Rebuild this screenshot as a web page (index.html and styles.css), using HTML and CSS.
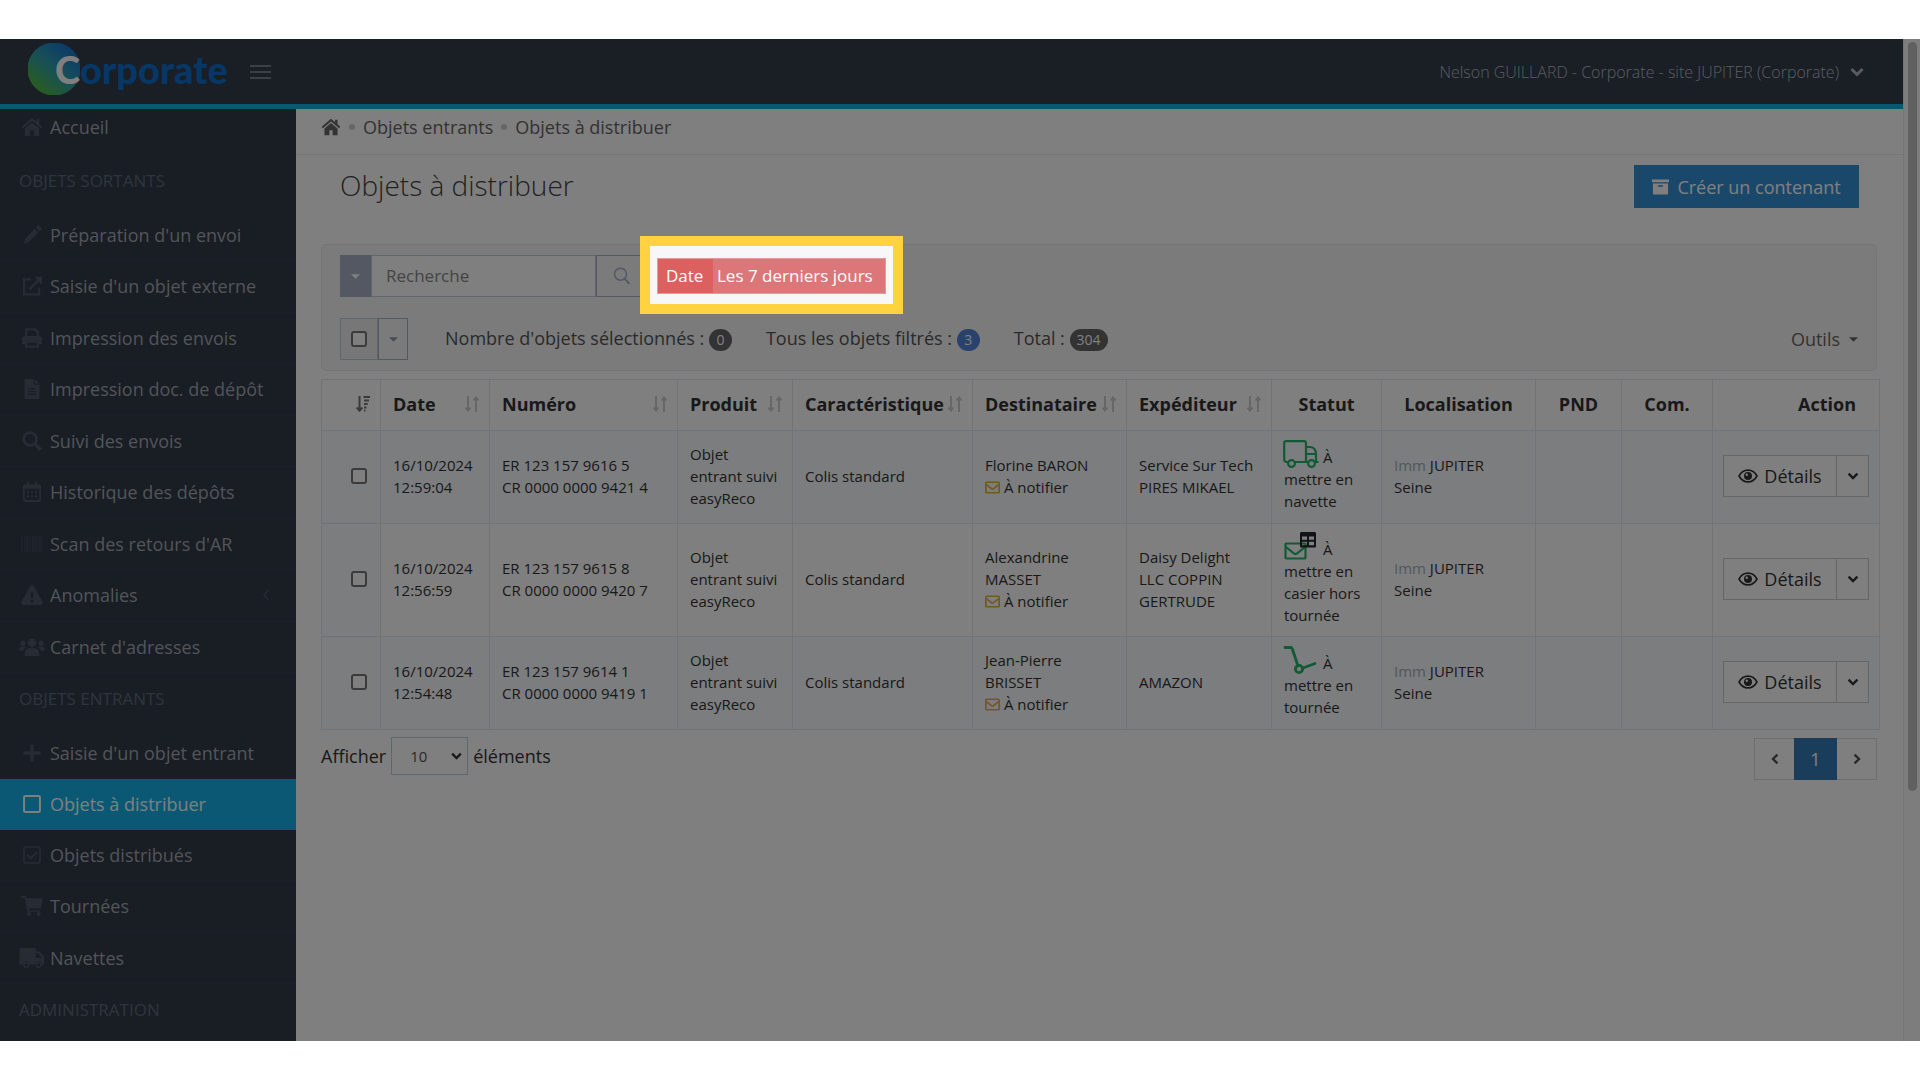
FILE: index.html
```html
<!DOCTYPE html>
<html lang="fr">
<head>
<meta charset="utf-8">
<title>Objets à distribuer</title>
<link rel="stylesheet" href="styles.css">
</head>
<body>
<svg class="sprite" aria-hidden="true">
  <symbol id="home" viewBox="0 0 24 22"><path d="M12 1 0.6 10.6l1.5 1.8L12 4.2l9.900 8.200 1.500-1.800-3.400-2.900V2h-3v3.200z"/><path d="M12 6 4 12.700V21h6v-6h4v6h6v-8.300z"/></symbol>
  <symbol id="pencil" viewBox="0 0 24 24"><path d="M15 4.500 19.500 9 7.500 21 2 22.500 3.500 17zM16.500 3l2-1.800c.7-.7 1.800-.7 2.500 0l2 2c.7.700.7 1.800 0 2.500L21 7.500zM4.500 18.500 3.800 20.800 6 20z" fill-rule="evenodd"/></symbol>
  <symbol id="external" viewBox="0 0 24 24"><path d="M11 4H2.500v18h18v-8" fill="none" stroke="currentColor" stroke-width="2.600"/><path d="M9 16 20 5" stroke="currentColor" stroke-width="3.200"/><path d="M14.500 1H24v9.500z"/></symbol>
  <symbol id="print" viewBox="0 0 24 24"><path d="M5 11V1.500h11L19 4.500V11M5 16h14v6.500H5z" fill="none" stroke="currentColor" stroke-width="2.600"/><path d="M3.500 9.500h17C22.500 9.500 24 11 24 13v6.500h-4v-5H4v5H0V13c0-2 1.500-3.500 3.500-3.500z"/></symbol>
  <symbol id="file" viewBox="0 0 18 24"><path d="M1 0h10v7h7v16c0 .6-.4 1-1 1H1c-.6 0-1-.4-1-1V1c0-.6.4-1 1-1zm3.500 11v1.500h9V11zm0 3.300v1.500h9v-1.500zm0 3.300v1.500h9v-1.500zM12.500 0 18 5.500h-5.500z" fill-rule="evenodd"/></symbol>
  <symbol id="search" viewBox="0 0 24 24"><circle cx="9.700" cy="9.700" r="7.700" fill="none" stroke="currentColor" stroke-width="3.400"/><path d="m15 15 7.500 7.500" stroke="currentColor" stroke-width="4"/></symbol>
  <symbol id="search-thin" viewBox="0 0 24 24"><circle cx="10" cy="9.500" r="8" fill="none" stroke="currentColor" stroke-width="2"/><path d="m15.500 15.500 6.500 7" stroke="currentColor" stroke-width="2.600"/></symbol>
  <symbol id="calendar" viewBox="0 0 22 24"><rect x="1.200" y="4.200" width="19.600" height="18.600" rx="2" fill="none" stroke="currentColor" stroke-width="2.200"/><path d="M1 4h20v4H1zM5 0h2.600v5H5zM14.400 0H17v5h-2.600zM5 11h2.500v2.500H5zm4.800 0h2.500v2.500H9.800zm4.700 0H17v2.500h-2.500zM5 16h2.500v2.500H5zm4.800 0h2.500v2.500H9.800zm4.700 0H17v2.500h-2.500z"/></symbol>
  <symbol id="barcode" viewBox="0 0 24 18"><path d="M0 0h1.500v18H0zM3 0h1v18H3zM5 0h2v18H5zM8 0h1v18H8zM10 0h.8v18H10zM12 0h2v18h-2zM15 0h2v18h-2zM18 0h1v18h-1zM20 0h2v18h-2zM23 0h1v18h-1z"/></symbol>
  <symbol id="warning" viewBox="0 0 26 24"><path d="M13 0c.8 0 1.400.400 1.800 1l10.900 19.500c.9 1.500-.1 3.500-1.800 3.500H2.100C.4 24-.6 22 .3 20.500L11.200 1c.4-.6 1-1 1.800-1zm-1.700 8 .4 7.500h2.600l.4-7.500zM13 17a2 2 0 1 0 0 4 2 2 0 0 0 0-4z" fill-rule="evenodd"/></symbol>
  <symbol id="users" viewBox="0 0 30 21"><circle cx="15" cy="5.500" r="5"/><circle cx="4.500" cy="6" r="3"/><circle cx="25.500" cy="6" r="3"/><path d="M6.500 21v-3c0-3.500 2.500-6 6-6h5c3.500 0 6 2.500 6 6v3zM0 14.500v-1.500c0-1.700 1.300-3 3-3h3c.8 0 1.500.300 2 .8-1.600 1-2.600 2.300-2.900 3.700zM30 14.500v-1.500c0-1.700-1.300-3-3-3h-3c-.8 0-1.500.300-2 .8 1.600 1 2.600 2.300 2.900 3.700z"/></symbol>
  <symbol id="plus" viewBox="0 0 22 22"><path d="M9 0.500h4V9h8.500v4H13v8.500H9V13H.5V9H9z"/></symbol>
  <symbol id="square" viewBox="0 0 22 22"><rect x="1.300" y="1.300" width="19.400" height="19.400" rx="1.500" fill="none" stroke="currentColor" stroke-width="2.400"/></symbol>
  <symbol id="check-square" viewBox="0 0 22 22"><rect x="1.200" y="1.200" width="19.600" height="19.600" rx="1.500" fill="none" stroke="currentColor" stroke-width="2"/><path d="m5.500 11 4 4 7.500-7.500" fill="none" stroke="currentColor" stroke-width="2.400"/></symbol>
  <symbol id="cart" viewBox="0 0 26 24"><path d="M0 0h5.500l.5 2.800h20L23.500 15H9l.4 2.300h13.800L22.700 19H7.500L4 2.300H0z"/><circle cx="9.500" cy="21.500" r="2.400"/><circle cx="21" cy="21.500" r="2.400"/></symbol>
  <symbol id="truck" viewBox="0 0 30 24"><path d="M1.500 0H18c.8 0 1.500.700 1.500 1.500V4h3.200c.6 0 1.200.200 1.600.700l4.500 4.500c.4.400.7 1 .7 1.600V18H30v1.800h-3a4 4 0 0 0-8 0h-7a4 4 0 0 0-8 0H1.500C.7 19.800 0 19.200 0 18.300V1.500C0 .700.7 0 1.500 0zm18 6.300V12h7.700l-4.700-5.700z" fill-rule="evenodd"/><circle cx="8" cy="20.300" r="2.900" fill="none" stroke="currentColor" stroke-width="1.800"/><circle cx="23" cy="20.300" r="2.900" fill="none" stroke="currentColor" stroke-width="1.800"/></symbol>
  <symbol id="angle-left" viewBox="0 0 8 14"><path d="M7 1 1.500 7 7 13" fill="none" stroke="currentColor" stroke-width="1.600"/></symbol>
  <symbol id="chevron-down" viewBox="0 0 14 10"><path d="m1.500 2 5.500 5.500L12.500 2" fill="none" stroke="currentColor" stroke-width="3"/></symbol>
  <symbol id="chevron-left" viewBox="0 0 10 14"><path d="M8 1.500 2.500 7 8 12.500" fill="none" stroke="currentColor" stroke-width="3"/></symbol>
  <symbol id="chevron-right" viewBox="0 0 10 14"><path d="M2 1.500 7.500 7 2 12.500" fill="none" stroke="currentColor" stroke-width="3"/></symbol>
  <symbol id="caret" viewBox="0 0 10 5"><path d="M0 0h10L5 5z"/></symbol>
  <symbol id="archive" viewBox="0 0 18 16"><path d="M0 0h18v3H0zM1 4.200h16V15c0 .6-.4 1-1 1H2c-.6 0-1-.4-1-1zm5.500 2v1.500h5V6.200z" fill-rule="evenodd"/></symbol>
  <symbol id="sort" viewBox="0 0 14 16"><path d="M3 0v14M0.500 11.500 3 14.500l2.500-3M11 16V2M8.500 4.500 11 1.500l2.500 3" fill="none" stroke="currentColor" stroke-width="1.900"/></symbol>
  <symbol id="sort-desc" viewBox="0 0 14 16"><path d="M3.500 0v14M.7 11.500l2.800 3.300 2.800-3.300" fill="none" stroke="currentColor" stroke-width="2"/><path d="M7.500 1H14M8 4.500h5M8 8h3.700M8 11.500h2.500M8 14.500h1.500" stroke="currentColor" stroke-width="2" fill="none"/></symbol>
  <symbol id="mail" viewBox="0 0 16 13"><rect x=".9" y=".9" width="14.200" height="11.200" rx=".8" fill="none" stroke="currentColor" stroke-width="1.800"/><path d="m1.500 3.500 5.300 4.300c.7.600 1.700.6 2.400 0l5.300-4.300" fill="none" stroke="currentColor" stroke-width="1.800"/></symbol>
  <symbol id="eye" viewBox="0 0 20 14"><path d="M1 7c2-3.700 5.200-5.900 9-5.900S17 3.300 19 7c-2 3.700-5.200 5.900-9 5.900S3 10.700 1 7z" fill="none" stroke="currentColor" stroke-width="1.600"/><circle cx="10" cy="7" r="4"/><circle cx="8.800" cy="5.800" r="1.200" fill="#fff"/></symbol>
  <symbol id="truck-line" viewBox="0 0 36 28"><g fill="none" stroke="currentColor" stroke-width="2.200"><path d="M5 22H3.500C2 22 1.200 21 1.200 19.500V3c0-1.300.9-1.800 2-1.800h17.800c1.200 0 2 .8 2 1.800v19H12"/><path d="M23 7h4.500c3.500 0 5.500 3.500 5.500 7v8h2.500M23 22h3M23 14h10"/><circle cx="8.500" cy="23.500" r="3.400"/><circle cx="28.500" cy="23.500" r="3.400"/></g></symbol>
  <symbol id="mail-grid" viewBox="0 0 36 28"><g fill="none" stroke="currentColor" stroke-width="2.200"><rect x="2.500" y="11.500" width="20" height="15" rx=".6"/><path d="m3 15 7.500 6.200c1.200 1 2.800 1 4 0L22 15"/></g><path d="M18.500 0h13c1 0 1.500.600 1.500 1.500v12.500c0 1-.6 1.500-1.500 1.500h-13c-1 0-1.500-.5-1.500-1.500V1.500c0-.9.500-1.500 1.500-1.500zM19 4.500v3.300h5V4.500zm7 0v3.300h5V4.500zm-7 5.300v3.500h5V9.800zm7 0v3.500h5V9.800z" fill="#22262e" fill-rule="evenodd"/></symbol>
  <symbol id="dolly" viewBox="0 0 36 28"><g fill="none" stroke="currentColor" stroke-width="2.800"><path d="M2 1.500h5.500c1 0 1.500.500 1.800 1.300L15 20M20 22l12-4.500" stroke-linecap="round"/><circle cx="16" cy="23" r="3.600"/></g></symbol>
</svg>

<div class="frame">
  <div class="app">
    <header class="topbar">
      <a class="logo" href="#"><span class="logo-initial">C</span>orporate</a>
      <button class="menu-toggle" type="button" aria-label="Menu"><span></span><span></span><span></span></button>
      <button class="user" type="button">Nelson GUILLARD - Corporate - site JUPITER (Corporate)<svg class="i-chevron"><use href="#chevron-down"/></svg></button>
    </header>
    <div class="body">
      <nav class="sidebar">
        <a class="item first" href="#"><svg><use href="#home"/></svg>Accueil</a>
        <h2>OBJETS SORTANTS</h2>
        <ul>
          <li><a class="item" href="#"><svg><use href="#pencil"/></svg>Préparation d'un envoi</a></li>
          <li><a class="item" href="#"><svg><use href="#external"/></svg>Saisie d'un objet externe</a></li>
          <li><a class="item" href="#"><svg><use href="#print"/></svg>Impression des envois</a></li>
          <li><a class="item" href="#"><svg><use href="#file"/></svg>Impression doc. de dépôt</a></li>
          <li><a class="item" href="#"><svg><use href="#search"/></svg>Suivi des envois</a></li>
          <li><a class="item" href="#"><svg><use href="#calendar"/></svg>Historique des dépôts</a></li>
          <li><a class="item" href="#"><svg class="barcode"><use href="#barcode"/></svg>Scan des retours d'AR</a></li>
          <li><a class="item" href="#"><svg><use href="#warning"/></svg>Anomalies<svg class="more"><use href="#angle-left"/></svg></a></li>
          <li><a class="item" href="#"><svg class="low"><use href="#users"/></svg>Carnet d'adresses</a></li>
        </ul>
        <h2>OBJETS ENTRANTS</h2>
        <ul>
          <li><a class="item" href="#"><svg class="low"><use href="#plus"/></svg>Saisie d'un objet entrant</a></li>
          <li><a class="item active" href="#" aria-current="page"><svg class="low"><use href="#square"/></svg>Objets à distribuer</a></li>
          <li><a class="item" href="#"><svg class="low"><use href="#check-square"/></svg>Objets distribués</a></li>
          <li><a class="item" href="#"><svg><use href="#cart"/></svg>Tournées</a></li>
          <li><a class="item" href="#"><svg><use href="#truck"/></svg>Navettes</a></li>
        </ul>
        <h2>ADMINISTRATION</h2>
      </nav>
      <main class="content">
        <nav class="crumbs">
          <a href="#" aria-label="Accueil"><svg><use href="#home"/></svg></a>
          <i></i><a href="#">Objets entrants</a><i></i><a href="#">Objets à distribuer</a>
        </nav>
        <div class="page">
          <div class="heading">
            <h1>Objets à distribuer</h1>
            <button class="create" type="button"><svg><use href="#archive"/></svg>Créer un contenant</button>
          </div>
          <section class="filters">
            <div class="search-row">
              <button class="search-menu" type="button" aria-label="Options de recherche"><svg class="i-caret"><use href="#caret"/></svg></button>
              <input class="search-input" type="text" placeholder="Recherche" aria-label="Recherche">
              <button class="search-go" type="button" aria-label="Rechercher"><svg><use href="#search-thin"/></svg></button>
              <div class="spot"><button class="tag" type="button"><span class="tag-key">Date</span><span class="tag-value">Les 7 derniers jours</span></button></div>
            </div>
            <div class="count-row">
              <label class="check-all"><input type="checkbox" aria-label="Tout sélectionner"></label>
              <button class="check-menu" type="button" aria-label="Options de sélection"><svg class="i-caret"><use href="#caret"/></svg></button>
              <p class="counts">
                <span>Nombre d'objets sélectionnés : <b>0</b></span>
                <span>Tous les objets filtrés : <b class="blue">3</b></span>
                <span>Total : <b>304</b></span>
              </p>
              <button class="tools" type="button">Outils<svg class="i-caret"><use href="#caret"/></svg></button>
            </div>
          </section>
          <table>
            <colgroup><col class="w-check"><col class="w-date"><col class="w-num"><col class="w-prod"><col class="w-car"><col class="w-dest"><col class="w-exp"><col class="w-stat"><col class="w-loc"><col class="w-pnd"><col class="w-com"><col class="w-act"></colgroup>
            <thead>
              <tr>
                <th class="end" aria-label="Ordre"><svg class="i-sort on"><use href="#sort-desc"/></svg></th>
                <th><span class="th">Date<svg class="i-sort"><use href="#sort"/></svg></span></th>
                <th><span class="th">Numéro<svg class="i-sort"><use href="#sort"/></svg></span></th>
                <th><span class="th">Produit<svg class="i-sort"><use href="#sort"/></svg></span></th>
                <th><span class="th">Caractéristique<svg class="i-sort"><use href="#sort"/></svg></span></th>
                <th><span class="th">Destinataire<svg class="i-sort"><use href="#sort"/></svg></span></th>
                <th><span class="th">Expéditeur<svg class="i-sort"><use href="#sort"/></svg></span></th>
                <th class="mid">Statut</th><th class="mid">Localisation</th><th class="mid">PND</th><th class="mid">Com.</th><th class="last">Action</th>
              </tr>
            </thead>
            <tbody>
              <tr>
                <td class="end"><input type="checkbox" aria-label="Sélectionner ER 123 157 9616 5"></td>
                <td>16/10/2024 12:59:04</td>
                <td>ER 123 157 9616 5<br>CR 0000 0000 9421 4</td>
                <td>Objet entrant suivi easyReco</td>
                <td>Colis standard</td>
                <td>Florine BARON<br><svg class="i-mail"><use href="#mail"/></svg> À notifier</td>
                <td>Service Sur Tech<br>PIRES MIKAEL</td>
                <td class="status"><svg><use href="#truck-line"/></svg> À mettre en navette</td>
                <td><span class="muted">Imm</span> JUPITER<br>Seine</td>
                <td></td><td></td>
                <td class="actions"><div class="split"><button type="button"><svg><use href="#eye"/></svg>Détails</button><button type="button" class="more-btn" aria-label="Autres actions"><svg><use href="#chevron-down"/></svg></button></div></td>
              </tr>
              <tr>
                <td class="end"><input type="checkbox" aria-label="Sélectionner ER 123 157 9615 8"></td>
                <td>16/10/2024 12:56:59</td>
                <td>ER 123 157 9615 8<br>CR 0000 0000 9420 7</td>
                <td>Objet entrant suivi easyReco</td>
                <td>Colis standard</td>
                <td>Alexandrine MASSET<br><svg class="i-mail"><use href="#mail"/></svg> À notifier</td>
                <td>Daisy Delight LLC COPPIN GERTRUDE</td>
                <td class="status"><svg><use href="#mail-grid"/></svg> À mettre en casier hors tournée</td>
                <td><span class="muted">Imm</span> JUPITER<br>Seine</td>
                <td></td><td></td>
                <td class="actions"><div class="split"><button type="button"><svg><use href="#eye"/></svg>Détails</button><button type="button" class="more-btn" aria-label="Autres actions"><svg><use href="#chevron-down"/></svg></button></div></td>
              </tr>
              <tr>
                <td class="end"><input type="checkbox" aria-label="Sélectionner ER 123 157 9614 1"></td>
                <td>16/10/2024 12:54:48</td>
                <td>ER 123 157 9614 1<br>CR 0000 0000 9419 1</td>
                <td>Objet entrant suivi easyReco</td>
                <td>Colis standard</td>
                <td>Jean-Pierre BRISSET<br><svg class="i-mail"><use href="#mail"/></svg> À notifier</td>
                <td>AMAZON</td>
                <td class="status"><svg><use href="#dolly"/></svg> À mettre en tournée</td>
                <td><span class="muted">Imm</span> JUPITER<br>Seine</td>
                <td></td><td></td>
                <td class="actions"><div class="split"><button type="button"><svg><use href="#eye"/></svg>Détails</button><button type="button" class="more-btn" aria-label="Autres actions"><svg><use href="#chevron-down"/></svg></button></div></td>
              </tr>
            </tbody>
          </table>
          <div class="table-foot">
            <label class="length">Afficher
              <span class="select"><select><option>10</option><option>25</option><option>50</option></select><svg><use href="#chevron-down"/></svg></span>
              éléments</label>
            <div class="pager">
              <button type="button" aria-label="Page précédente"><svg><use href="#chevron-left"/></svg></button>
              <button type="button" class="current">1</button>
              <button type="button" aria-label="Page suivante"><svg><use href="#chevron-right"/></svg></button>
            </div>
          </div>
        </div>
      </main>
    </div>
  </div>
  <div class="scrollbar"><div class="thumb"></div></div>
</div>
</body>
</html>
```
FILE: styles.css
```css
* { box-sizing: border-box; }
body {
  margin: 0;
  padding: 39px 0;
  background: #fff;
  color: #333;
  font: 18px/22px "Open Sans", "Noto Sans", sans-serif;
}
a { color: inherit; text-decoration: none; }
ul, h1, h2, p { margin: 0; padding: 0; list-style: none; }
button, input, select { font: inherit; color: inherit; }
button { padding: 0; border: 0; background: none; }
svg { fill: currentColor; flex: none; }
.sprite { position: absolute; width: 0; height: 0; }

.frame {
  display: flex;
  min-height: calc(100vh - 78px);
  overflow: hidden;
}
.app { flex: 1; display: flex; flex-direction: column; min-width: 0; }
.scrollbar {
  width: 17px;
  padding: 3px 3px 0 4px;
  background: #fafafa;
  border-left: 1px solid #eaeaea;
}
.thumb { height: 75%; border-radius: 5px; background: #c1c1c1; }

/* Top bar */
.topbar {
  display: flex;
  align-items: center;
  height: 70px;
  padding: 0 39px 0 28px;
  background: #353d4b;
  border-bottom: 5px solid #12b0e4;
}
.logo {
  display: flex;
  align-items: center;
  width: 222px;
  height: 52px;
  padding-left: 27px;
  margin-bottom: 6px;
  background: radial-gradient(circle at 26px 26px, transparent 26px, #353d4b 27px), linear-gradient(40deg, #4fb848 12px, #2f9fb0 38px, #1878d0 62px);
  background-size: 100% 100%, 52px 52px;
  background-repeat: no-repeat;
  color: #0c6fca;
  font: 900 38px/52px Lato, sans-serif;
}
.logo-initial { color: #fff; }
.menu-toggle { display: grid; gap: 4px; width: 21px; }
.menu-toggle span { height: 2px; background: #77808f; }
.user {
  display: flex;
  align-items: center;
  gap: 11px;
  margin-left: auto;
  color: #b4b9c2;
  font-size: 16px;
  font-weight: 300;
}
.i-chevron { width: 14px; height: 10px; }

.body { flex: 1; display: flex; }

/* Sidebar */
.sidebar { width: 296px; flex: none; background: #323a49; }
.sidebar h2 {
  height: 55px;
  padding: 15px 19px;
  color: #5f6b7a;
  font-size: 17px;
  font-weight: 400;
  line-height: 22px;
}
.item {
  display: flex;
  align-items: center;
  gap: 5px;
  height: 51px;
  padding: 0 26px 1px 19px;
  border-bottom: 1px solid #373f4e;
  color: #a4a9b2;
}
li:nth-child(even) .item { height: 52px; }
.item svg { width: 26px; height: 20px; color: #4e5968; }
.item svg.low { height: 18px; }
.item svg.barcode { height: 16px; color: #414b5a; }
.item svg.more { width: 8px; height: 12px; margin-left: auto; }
.item.first { height: 46px; padding-bottom: 10px; border: 0; }
li .item.active { height: 51px; background: #14b0e8; color: #fff; border: 0; }
.item.active svg { color: #fff; }

/* Content */
.content { flex: 1; min-width: 0; background: #fff; }
.crumbs {
  display: flex;
  align-items: center;
  gap: 8px;
  height: 46px;
  padding: 0 25px 9px;
  border-bottom: 1px solid #eee;
  color: #666;
}
.crumbs svg { display: block; width: 20px; height: 18px; }
.crumbs i { width: 6px; height: 6px; border-radius: 3px; background: #ccc; }
.page { padding: 10px 26px 0 25px; }
.heading {
  display: flex;
  align-items: center;
  justify-content: space-between;
  height: 43px;
  margin-bottom: 36px;
  padding: 0 18px 0 19px;
}
h1 { padding-bottom: 4px; font-size: 28px; font-weight: 300; line-height: 36px; color: #444; }
.create {
  display: flex;
  align-items: center;
  justify-content: center;
  gap: 8px;
  width: 225px;
  height: 43px;
  background: #3590d6;
  color: #fff;
}
.create svg { width: 17px; height: 16px; }

.filters {
  display: grid;
  gap: 21px;
  padding: 10px 18px;
  border: 1px solid #eaeaea;
  border-radius: 5px;
  background: #f7f7f7;
  margin-bottom: 8px;
}
.search-row, .count-row { display: flex; height: 42px; align-items: stretch; }
.i-caret { width: 9px; height: 5px; }
.search-menu {
  display: flex;
  align-items: center;
  justify-content: center;
  width: 31px;
  background: #a7b1c6;
  color: #fff;
}
.search-input {
  width: 225px;
  padding: 0 14px;
  border: 1px solid #c2cad8;
  background: #fff;
  font-size: 17px;
}
.search-input::placeholder { color: #888; opacity: 1; }
.search-go { width: 52px; border: 1px solid #a7b1c6; color: #a7b1c6; }
.search-go svg { display: block; width: 18px; height: 20px; margin: auto; }

/* Guided-tour spotlight: dims everything in the frame except the active filter */
.spot { position: relative; align-self: center; margin-left: 9px; }
.spot::after {
  content: "";
  position: absolute;
  z-index: 10;
  inset: -22px -17px -20px;
  border: 10px solid #ffd242;
  box-shadow: 0 0 0 4000px rgba(0, 0, 0, .5);
  pointer-events: none;
}
.tag {
  display: flex;
  height: 36px;
  border: 1px solid #e49a9a;
  background: #db7779;
  color: #fff;
  font-size: 17px;
  font-weight: 500;
  line-height: 34px;
  text-align: left;
}
.tag-key { min-width: 55px; padding: 0 8px; background: #dc6060; }
.tag-value { min-width: 172px; padding: 0 8px 0 4px; }

.check-all {
  display: flex;
  align-items: center;
  justify-content: center;
  width: 38px;
  background: #eee;
  border: 1px solid #c2cad8;
}
input[type="checkbox"] {
  appearance: none;
  display: block;
  width: 16px;
  height: 16px;
  margin: 0;
  border: 2px solid #777;
  border-radius: 3px;
  background: #fff;
}
.check-menu {
  display: flex;
  align-items: center;
  justify-content: center;
  width: 30px;
  border: 1px solid #a7b1c6;
  color: #8d97ad;
}
.counts { display: flex; gap: 34px; margin-left: 37px; line-height: 40px; color: #555; }
.counts b {
  display: inline-block;
  min-width: 23px;
  padding: 0 7px;
  border-radius: 11px;
  background: #666;
  color: #fff;
  font-size: 14px;
  font-weight: 400;
  line-height: 22px;
  text-align: center;
}
.counts b.blue { background: #5084d8; }
.tools { display: flex; align-items: center; gap: 9px; margin-left: auto; color: #666; }

/* Table */
table { width: 100%; table-layout: fixed; border-collapse: collapse; font-size: 15px; line-height: 22px; }
.w-check { width: 59px; } .w-date { width: 109px; } .w-num { width: 188px; } .w-prod { width: 115px; }
.w-car { width: 180px; } .w-dest { width: 154px; } .w-exp { width: 145px; } .w-stat { width: 110px; }
.w-loc { width: 154px; } .w-pnd { width: 86px; } .w-com { width: 91px; } .w-act { width: 167px; }
th, td { border: 1px solid #e3e8ed; padding: 8px 13px 10px 12px; text-align: left; }
th { height: 51px; padding: 8px 10px 10px 12px; font-size: 18px; font-weight: 700; white-space: nowrap; }
tbody tr { height: 93px; }
tbody tr:nth-child(odd), tbody tr:nth-child(even) td:first-child { background: #f8fafe; }
.th { display: flex; align-items: center; justify-content: space-between; }
.i-sort { width: 14px; height: 16px; color: #ccc; }
th .i-sort { display: block; }
.i-sort.on { margin-left: auto; color: #777; }
.end input[type="checkbox"] { margin-left: auto; }
th.mid { text-align: center; padding-left: 0; padding-right: 0; }
th.last { text-align: right; padding-right: 23px; }
.muted { color: #a3b1b8; }
.i-mail { width: 15px; height: 13px; color: #e2b13c; vertical-align: -1px; }
td.status { padding-right: 4px; }
.status svg { width: 36px; height: 28px; margin-left: -1px; vertical-align: -5px; color: #26b36b; }
td.actions { padding: 0 10px 2px; }
.split { display: flex; justify-content: flex-end; height: 42px; font-size: 18px; }
.split button {
  display: flex;
  align-items: center;
  justify-content: center;
  gap: 6px;
  width: 114px;
  border: 1px solid #ccc;
  background: #fff;
}
.split button.more-btn { width: 33px; margin-left: -1px; }
.split svg { width: 20px; height: 14px; }
.split .more-btn svg { width: 12px; height: 8px; }

.table-foot { display: flex; justify-content: space-between; padding-top: 8px; }
.length { display: flex; align-items: center; gap: 5px; height: 36px; }
.select { display: grid; align-items: center; width: 77px; height: 38px; }
.select > * { grid-area: 1 / 1; }
.select select {
  appearance: none;
  width: 100%;
  height: 100%;
  padding: 0 18px;
  border: 1px solid #c2cad8;
  background: #fff;
  color: #555;
  font-size: 15px;
}
.select svg { width: 11px; height: 8px; justify-self: end; margin-right: 6px; pointer-events: none; }
.pager { display: flex; height: 42px; border: 1px solid #ddd; }
.pager button { display: flex; align-items: center; justify-content: center; width: 39px; color: #555; }
.pager svg { width: 8px; height: 12px; }
.pager .current { width: 43px; margin: -1px 0; background: #337ab7; color: #fff; }
```
